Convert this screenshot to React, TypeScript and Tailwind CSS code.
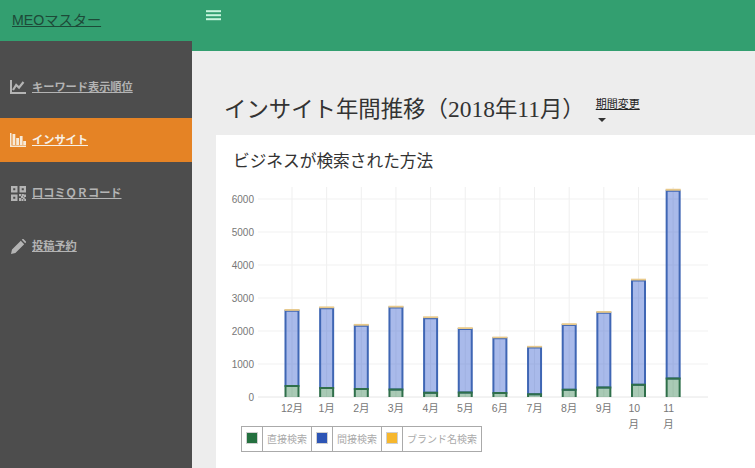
import type { ReactNode } from "react";

const jp = "font-['Liberation_Sans','Noto_Sans_CJK_JP',sans-serif]";

const months = ["12月", "1月", "2月", "3月", "4月", "5月", "6月", "7月", "8月", "9月", "10", "11"];
const direct = [330, 270, 240, 230, 130, 140, 120, 80, 220, 290, 370, 560];
const total = [2610, 2690, 2160, 2710, 2390, 2060, 1780, 1500, 2180, 2550, 3530, 6250];
const brand = [25, 25, 25, 25, 25, 25, 20, 20, 25, 25, 25, 30];

const y0 = 262;
const scale = 0.033;
const x = (i: number) => 76 + i * 34.65;

function Chart() {
  return (
    <svg width="539" height="239" viewBox="0 52 539 239" className="block overflow-visible">
      {[0, 1, 2, 3, 4, 5, 6, 7, 8, 9, 10, 11].map((i) => (
        <line key={i} x1={x(i)} x2={x(i)} y1={52} y2={262} stroke="#efefef" />
      ))}
      {[1000, 2000, 3000, 4000, 5000, 6000].map((v) => (
        <line key={v} x1={42} x2={492} y1={y0 - v * scale} y2={y0 - v * scale} stroke="#f1f1f1" />
      ))}
      <line x1={42} x2={492} y1={y0} y2={y0} stroke="#e6e6e6" />
      {[0, 1000, 2000, 3000, 4000, 5000, 6000].map((v) => (
        <text key={v} x={38} y={y0 - v * scale + 3.5} textAnchor="end" fontSize="10" fill="#777" fontFamily="Liberation Sans">
          {v}
        </text>
      ))}
      {months.map((m, i) => {
        const cx = x(i);
        const d = direct[i] * scale;
        const t = total[i] * scale;
        const b = brand[i] * scale;
        const l = cx - 6.5;
        const r = cx + 6.5;
        return (
          <g key={m}>
            <path d={`M${l} ${y0 - d}V${y0 - t}H${r}V${y0 - d}Z`} fill="rgba(50,90,205,0.42)" stroke="#3f66b4" strokeWidth="2" />
            <path d={`M${l} ${y0}V${y0 - d}H${r}V${y0}`} fill="rgba(30,115,60,0.38)" stroke="#2f6f4a" strokeWidth="2" />
            <rect x={cx - 7.5} y={y0 - t - b - 1} width={15} height={b + 1} fill="#e8c98a" />
            <text x={i > 9 ? cx - 10 : cx} y={y0 + 15} textAnchor={i > 9 ? "start" : "middle"} fontSize="10.5" fill="#777" fontFamily="Liberation Sans, Noto Sans CJK JP">
              {m}
            </text>
            {i > 9 && (
              <text x={cx - 10} y={y0 + 31} fontSize="10.5" fill="#777" fontFamily="Noto Sans CJK JP">
                月
              </text>
            )}
          </g>
        );
      })}
    </svg>
  );
}

function LegendCell({ color, label, w }: { color: string; label: string; w: string }) {
  return (
    <>
      <div className="flex w-[21px] items-center justify-center border-r border-[#aaa]">
        <span className={`mb-[3px] block h-[12px] w-[12px] border border-[#d0d0d0] ${color}`} />
      </div>
      <div className={`flex items-center justify-center border-r border-[#aaa] text-[10px] text-[#aaa] last:border-r-0 ${w}`}>{label}</div>
    </>
  );
}

const LineIcon = () => (
  <svg width="16" height="14" viewBox="0 0 16 14" fill="currentColor">
    <rect x="0" y="0" width="2" height="14" />
    <rect x="0" y="12" width="16" height="2" />
    <path d="M3 10 L6.2 5 L9 7.6 L13.5 2" fill="none" stroke="currentColor" strokeWidth="2.2" />
  </svg>
);

const BarIcon = () => (
  <svg width="16" height="14" viewBox="0 0 16 14" fill="currentColor">
    <rect x="0" y="0" width="1.5" height="14" />
    <rect x="0" y="12.5" width="16" height="1.5" />
    <rect x="2.5" y="1" width="2.8" height="11" />
    <rect x="6.2" y="5" width="2.8" height="7" />
    <rect x="9.8" y="3" width="2.8" height="9" />
    <rect x="13.2" y="8" width="2.8" height="4" />
  </svg>
);

const QrIcon = () => (
  <svg width="15" height="15" viewBox="0 0 15 15" fill="currentColor">
    <path fillRule="evenodd" d="M0 0h6.5v6.5H0zM2.2 2.2v2.1h2.1V2.2zM8.5 0H15v6.5H8.5zM10.7 2.2v2.1h2.1V2.2zM0 8.5h6.5V15H0zM2.2 10.7v2.1h2.1v-2.1z" />
    <path d="M8 8h2.4v2.2H8zM11 8h1.9v1.9H11zM13 8.5h2v2.4h-2zM10 10h2.4v2.2H10zM8 12h2.2v3H8zM12 11.3h1.8v1.8H12zM10.6 13h1.9v2h-1.9zM13.2 12.8H15V15h-1.8z" />
  </svg>
);

const PencilIcon = () => (
  <svg width="15" height="15" viewBox="0 0 15 15" fill="currentColor">
    <path d="M0 15 L1 10.6 L9.8 1.8 L13.2 5.2 L4.4 14 Z M10.8 0.8 L11.6 0 Q12 -0.2 12.4 0.1 L14.9 2.6 Q15.2 3 14.9 3.4 L14.2 4.2 Z" />
  </svg>
);

const BarsIcon = () => (
  <svg width="15" height="11" viewBox="0 0 15 11" fill="currentColor" className="block">
    <rect y="0.2" width="15" height="2" />
    <rect y="4.2" width="15" height="2" />
    <rect y="8.2" width="15" height="2" />
  </svg>
);

function NavItem({ icon, label, active, h }: { icon: ReactNode; label: string; active?: boolean; h: string }) {
  return (
    <a
      className={`flex items-center gap-[6px] pl-[10px] text-[11.2px] font-bold underline ${h} ${
        active ? "bg-[#e58325] text-[#f7f0e6]" : "text-[#b4b4b4]"
      }`}
    >
      <span className={`flex w-[16px] justify-center ${active ? "text-[#f7ead8]" : "text-[#b4b4b4]"}`}>{icon}</span>
      {label}
    </a>
  );
}

export default function App() {
  return (
    <div className={`flex h-[468px] w-[755px] overflow-hidden bg-[#ededed] ${jp}`}>
      <aside className="flex w-[192px] shrink-0 flex-col bg-[#4d4d4d]">
        <div className="flex h-[41px] items-center bg-[#339f70] pl-[12px] text-[14.2px] text-[#1d4a38] underline">MEOマスター</div>
        <nav className="flex flex-col pt-[24px]">
          <NavItem h="h-[44px] mb-[9px]" icon={<LineIcon />} label="キーワード表示順位" />
          <NavItem h="h-[44px] mb-[9px]" active icon={<BarIcon />} label="インサイト" />
          <NavItem h="h-[44px] mb-[9px]" icon={<QrIcon />} label="口コミＱＲコード" />
          <NavItem h="h-[44px]" icon={<PencilIcon />} label="投稿予約" />
        </nav>
      </aside>
      <main className="flex min-w-0 flex-1 flex-col">
        <header className="h-[51px] shrink-0 bg-[#339f70] pl-[14px] pt-[10px] text-[#c8f5de]">
          <BarsIcon />
        </header>
        <div className="flex h-[84px] shrink-0 items-start pl-[32px] pt-[43px]">
          <h1 className="text-[22.4px] leading-[30px] whitespace-nowrap text-[#333]">
            インサイト年間推移（<span className="font-['Liberation_Serif'] text-[23.5px]">2018</span>年<span className="font-['Liberation_Serif'] text-[23.5px]">11</span>月）
          </h1>
          <div className="ml-[11px] flex flex-col pt-[3px] text-[11px] leading-[14px] text-[#222]">
            <span className="underline">期間変更</span>
            <span className="ml-[2px] mt-[7px] h-0 w-0 border-x-[4px] border-t-[4px] border-x-transparent border-t-[#333]" />
          </div>
        </div>
        <section className="ml-[24px] flex-1 bg-white">
          <h2 className="pl-[17px] pt-[14px] text-[16.7px] leading-[25px] text-[#333]">ビジネスが検索された方法</h2>
          <div className="mt-[13px]">
            <Chart />
          </div>
          <div className="ml-[25px] flex h-[26px] w-fit border border-[#aaa]">
            <LegendCell color="bg-[#24703f]" w="w-[49px]" label="直接検索" />
            <LegendCell color="bg-[#2d55b5]" w="w-[49px]" label="間接検索" />
            <LegendCell color="bg-[#f6b72e]" w="w-[78px]" label="ブランド名検索" />
          </div>
        </section>
      </main>
    </div>
  );
}
